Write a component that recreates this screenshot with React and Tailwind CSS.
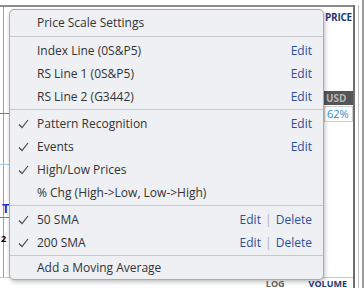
import clsx from 'clsx'

const groups = [
  [
    { label: 'Index Line (0S&P5)', action: 'edit' },
    { label: 'RS Line 1 (0S&P5)', action: 'edit' },
    { label: 'RS Line 2 (G3442)', action: 'edit' },
  ],
  [
    { label: 'Pattern Recognition', checked: true, action: 'edit' },
    { label: 'Events', checked: true, action: 'edit' },
    { label: 'High/Low Prices', checked: true },
    { label: '% Chg (High->Low, Low->High)' },
  ],
  [
    { label: '50 SMA', checked: true, action: 'both' },
    { label: '200 SMA', checked: true, action: 'both' },
  ],
]

function Check() {
  return (
    <svg width="11" height="10" viewBox="0 0 11 10" className="w-[19px] shrink-0 pl-[8px]">
      <path d="M1 5.5 L4 8.5 L10 1" fill="none" stroke="#4a4a4a" strokeWidth="1.2" />
    </svg>
  )
}

function Row({ label, checked, action }) {
  return (
    <div className="flex h-[23px] items-center pr-[11px]">
      <div className="flex w-[27px] shrink-0 items-center">{checked && <Check />}</div>
      <span className="flex-1 text-[#333]">{label}</span>
      {action === 'edit' && <span className="text-[#2d4f9a]">Edit</span>}
      {action === 'both' && (
        <span className="text-[#2d4f9a]">
          Edit <span className="px-[1px] text-[#b0b0b0]">|</span> Delete
        </span>
      )}
    </div>
  )
}

function Menu() {
  return (
    <div className="absolute left-[9px] top-[9px] w-[315px] rounded-[5px] border border-[#a9abb0] bg-[#eef0f3] text-[12px] shadow-[1px_2px_4px_rgba(0,0,0,0.25)]">
      <div className="flex h-[26px] items-center pl-[27px] text-[#333]">Price Scale Settings</div>
      {groups.map((rows, i) => (
        <div key={i} className="border-t border-[#c6c8cc] pb-[1px] pt-[2px]">
          {rows.map((r) => (
            <Row key={r.label} {...r} />
          ))}
        </div>
      ))}
      <div className={clsx('flex h-[24px] items-center border-t border-[#c6c8cc] pl-[27px] text-[#333]')}>
        Add a Moving Average
      </div>
    </div>
  )
}

export default function App() {
  return (
    <div
      className="relative flex h-[288px] w-[364px] overflow-hidden bg-white"
      style={{ fontFamily: '"Open Sans", sans-serif' }}
    >
      {/* chart + price axis */}
      <div className="flex w-[353px] flex-col pt-[5px]">
        <div className="flex flex-1 border-t-2 border-[#8c8c8c] pl-[3px]">
          <div className="relative flex-1 border-l border-[#a0a0a0]">
            <div className="absolute left-[-4px] top-[106px] h-[1px] w-[9px] bg-[#e05050]" />
            <div className="absolute left-[-4px] top-[157px] h-[1px] w-[9px] bg-[#a8c8e8]" />
            <div className="absolute left-[-4px] top-[210px] h-[1px] w-[9px] bg-[#c06070]" />
            <div className="absolute left-[-2px] top-[192px] text-[13px] font-bold text-[#2233cc]">T</div>
            <div className="absolute left-[-3px] top-[225px] text-[9px] font-bold text-black">2</div>
          </div>
          <div className="flex w-[29px] flex-col pt-[3px] text-[10px] font-bold">
            <div className="pl-[1px] tracking-tight text-[#1f3a78]">PRICE</div>
            <div className="mt-[66px] bg-[#555] pl-[2px] leading-[14px] text-[#b8b8b8]">USD</div>
            <div className="mt-[1px] border border-[#d0d0d0] pl-[2px] text-[11px] font-normal leading-[14px] text-[#2a8ad8]">
              62%
            </div>
          </div>
        </div>
        <div className="flex h-[11px] items-start justify-end gap-[24px] border-t border-[#c8c8c8] pr-[6px] pt-[1px] text-[9px] font-bold leading-[9px]">
          <span className="text-[#666]">LOG</span>
          <span className="text-[#1f3a78]">VOLUME</span>
        </div>
      </div>

      {/* right edge rails */}
      <div className="flex flex-1 pt-[5px]">
        <div className="w-[2px] bg-[#6e6e6e]" />
        <div className="w-[3px]" />
        <div className="w-[1px] bg-[#c0c0c0]" />
      </div>
      <div className="w-[2px] bg-[#9a9a9a]" />

      <Menu />
    </div>
  )
}
